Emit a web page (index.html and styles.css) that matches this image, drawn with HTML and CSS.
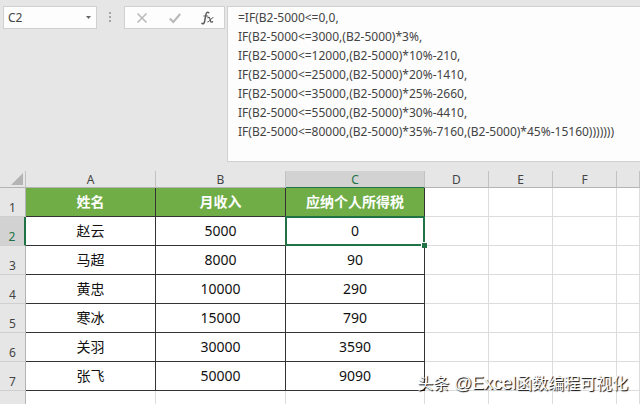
FILE: index.html
```html
<!DOCTYPE html>
<html lang="zh-CN">
  <head>
    <meta charset="UTF-8" />
    <title>个人所得税</title>
    <link rel="stylesheet" href="styles.css">
  </head>
  <body>
    <div class="formula-bar">
      <div class="name-box">
        <input class="name-input" type="text" value="C2" aria-label="名称框" />
        <button class="name-arrow" aria-label="展开名称">
          <svg width="5" height="3" viewBox="0 0 5 3"><path d="M0 0h5L2.500 3z" fill="#666" /></svg>
        </button>
      </div>
      <svg class="grip" width="2" height="12" viewBox="0 0 2 12" fill="#a6a6a6">
        <path d="M0 1h2v2H0zM0 5h2v2H0zM0 9h2v2H0z" />
      </svg>
      <div class="actions">
        <button class="action" aria-label="取消">
          <svg width="12" height="12" viewBox="0 0 12 12"><path d="M1.500 1.500 10.500 10.500M10.500 1.500 1.500 10.500" stroke="#b8b8b8" stroke-width="1.500" fill="none" /></svg>
        </button>
        <button class="action" aria-label="输入">
          <svg width="12" height="12" viewBox="0 0 12 12"><path d="M.8 6.500 4.300 10 11.200 2" stroke="#b8b8b8" stroke-width="2" fill="none" /></svg>
        </button>
        <button class="action" aria-label="插入函数">
          <svg width="13" height="14" viewBox="0 0 13 14" fill="none" stroke="#5c5c5c" stroke-linecap="round">
            <path d="M7.800 1.800C6.600.5 5.400 1.300 5 3.200L3.600 10.500C3.200 12.600 2 13.400 1 12.400" stroke-width="1.500" />
            <path d="M2.800 5h4" stroke-width="1" />
            <path d="M7 6.600C8.600 5.600 8.800 7.500 9.200 9 9.600 10.800 10.300 11.700 11.600 10.700" stroke-width="1.300" />
            <path d="M12 6.500C10.500 6.300 8.500 11.300 6.700 11.100" stroke-width="1" />
          </svg>
        </button>
      </div>
      <textarea class="formula" rows="7" spellcheck="false" aria-label="编辑栏">=IF(B2-5000&lt;=0,0,
IF(B2-5000&lt;=3000,(B2-5000)*3%,
IF(B2-5000&lt;=12000,(B2-5000)*10%-210,
IF(B2-5000&lt;=25000,(B2-5000)*20%-1410,
IF(B2-5000&lt;=35000,(B2-5000)*25%-2660,
IF(B2-5000&lt;=55000,(B2-5000)*30%-4410,
IF(B2-5000&lt;=80000,(B2-5000)*35%-7160,(B2-5000)*45%-15160)))))))</textarea>
    </div>

    <div class="sheet">
      <table class="grid">
        <colgroup>
          <col class="col-num" />
          <col class="col-wide" />
          <col class="col-wide" />
          <col class="col-tax" />
          <col class="col-std" />
          <col class="col-std" />
          <col class="col-std" />
          <col />
        </colgroup>
        <thead>
          <tr>
            <th class="corner"><svg width="12" height="12" viewBox="0 0 12 12"><path d="M12 0v12H0z" fill="#b4b4b4" /></svg></th>
            <th>A</th>
            <th>B</th>
            <th class="active">C</th>
            <th>D</th>
            <th>E</th>
            <th>F</th>
            <th></th>
          </tr>
        </thead>
        <tbody>
          <tr class="titles"><th>1</th><td class="data">姓名</td><td class="data">月收入</td><td class="data">应纳个人所得税</td><td></td><td></td><td></td><td></td></tr>
          <tr><th class="active">2</th><td class="data">赵云</td><td class="data">5000</td><td class="data selected">0</td><td></td><td></td><td></td><td></td></tr>
          <tr><th>3</th><td class="data">马超</td><td class="data">8000</td><td class="data">90</td><td></td><td></td><td></td><td></td></tr>
          <tr><th>4</th><td class="data">黄忠</td><td class="data">10000</td><td class="data">290</td><td></td><td></td><td></td><td></td></tr>
          <tr><th>5</th><td class="data">寒冰</td><td class="data">15000</td><td class="data">790</td><td></td><td></td><td></td><td></td></tr>
          <tr><th>6</th><td class="data">关羽</td><td class="data">30000</td><td class="data">3590</td><td></td><td></td><td></td><td></td></tr>
          <tr><th>7</th><td class="data">张飞</td><td class="data">50000</td><td class="data">9090</td><td></td><td></td><td></td><td></td></tr>
          <tr><th></th><td></td><td></td><td></td><td></td><td></td><td></td><td></td></tr>
        </tbody>
      </table>
    </div>

    <div class="watermark">头条 <span class="latin">@Excel</span>函数编程可视化</div>
  </body>
</html>
```

FILE: styles.css
```css
* {
  box-sizing: border-box;
}
body {
  margin: 0;
  height: 100vh;
  display: flex;
  flex-direction: column;
  overflow: hidden;
  position: relative;
  background-color: #e6e6e6;
  color: #444;
  font-family: "Noto Sans", "Noto Sans CJK SC", sans-serif;
  font-size: 12px;
}
button,
input,
textarea {
  font: inherit;
  color: inherit;
  margin: 0;
  padding: 0;
  border: none;
  background: none;
  outline: none;
}

/* formula bar */
.formula-bar {
  display: flex;
  align-items: flex-start;
  padding: 6px 0 9px 3px;
}
.name-box,
.actions {
  display: flex;
  height: 23px;
  border: 1px solid #d0d0d0;
  background-color: #fdfdfd;
}
.name-box {
  width: 94px;
}
.name-input {
  flex: 1;
  min-width: 0;
  padding-left: 4px;
}
.name-arrow {
  width: 16px;
  display: flex;
  align-items: center;
  justify-content: center;
}
.grip {
  margin: 5px 13px 0 12px;
}
.actions {
  width: 101px;
}
.action {
  flex: 1;
  display: flex;
  align-items: center;
  justify-content: center;
}
.formula {
  flex: 1;
  min-width: 0;
  height: 156px;
  margin-left: 2px;
  padding: 1px 0 0 10px;
  border: 1px solid #d0d0d0;
  border-right: none;
  background-color: #fdfdfd;
  line-height: 19px;
  white-space: pre;
  overflow: hidden;
  resize: none;
}

/* sheet */
.sheet {
  flex: 1;
  min-height: 0;
  overflow: hidden;
}
.grid {
  width: 100%;
  table-layout: fixed;
  border-collapse: separate;
  border-spacing: 0;
}
.col-num {
  width: 26px;
}
.col-wide {
  width: 130px;
}
.col-tax {
  width: 139px;
}
.col-std {
  width: 64px;
}
.grid th,
.grid td {
  padding: 0;
  text-align: center;
}
.grid th {
  font-weight: normal;
  background-color: #e6e6e6;
}
.grid thead th {
  height: 17px;
  padding-top: 2px;
  line-height: 14px;
  border-right: 1px solid #c2c2c2;
  border-bottom: 1px solid #b4b4b4;
}
.grid thead .corner {
  line-height: 0;
  vertical-align: bottom;
  text-align: right;
  padding: 0 2px 2px 0;
}
tbody th {
  height: 29px;
  line-height: 16px;
  vertical-align: bottom;
  border-right: 1px solid #b4b4b4;
  border-bottom: 1px solid #cfcfcf;
}
.grid .active {
  background-color: #d2d2d2;
  color: #217346;
}
.grid thead .active {
  border-bottom-color: #217346;
}
tbody .active {
  border-right: 2px solid #217346;
}
.grid td {
  height: 29px;
  line-height: 20px;
  font-size: 14px;
  color: #111;
  background-color: #fff;
  border-right: 1px solid #dcdcdc;
  border-bottom: 1px solid #dcdcdc;
}
.grid .data {
  border-color: #333;
}
.grid .titles .data {
  background-color: #70ad47;
  color: #fff;
  font-weight: bold;
}
.grid .selected {
  position: relative;
}
/* selection frame and fill handle */
.selected::before {
  content: "";
  position: absolute;
  inset: -1px;
  border: 2px solid #217346;
}
.selected::after {
  content: "";
  position: absolute;
  right: -3px;
  bottom: -3px;
  width: 5px;
  height: 5px;
  background-color: #217346;
  border: 1px solid #fff;
  border-width: 1px 0 0 1px;
}

.watermark {
  position: absolute;
  right: 12px;
  bottom: 8px;
  font-family: "Liberation Sans", "Noto Sans CJK SC", sans-serif;
  font-size: 16px;
  line-height: 24px;
  color: #fff;
  text-shadow: 1px 1px 1px #000;
}
.latin {
  font-size: 18px;
}
```
